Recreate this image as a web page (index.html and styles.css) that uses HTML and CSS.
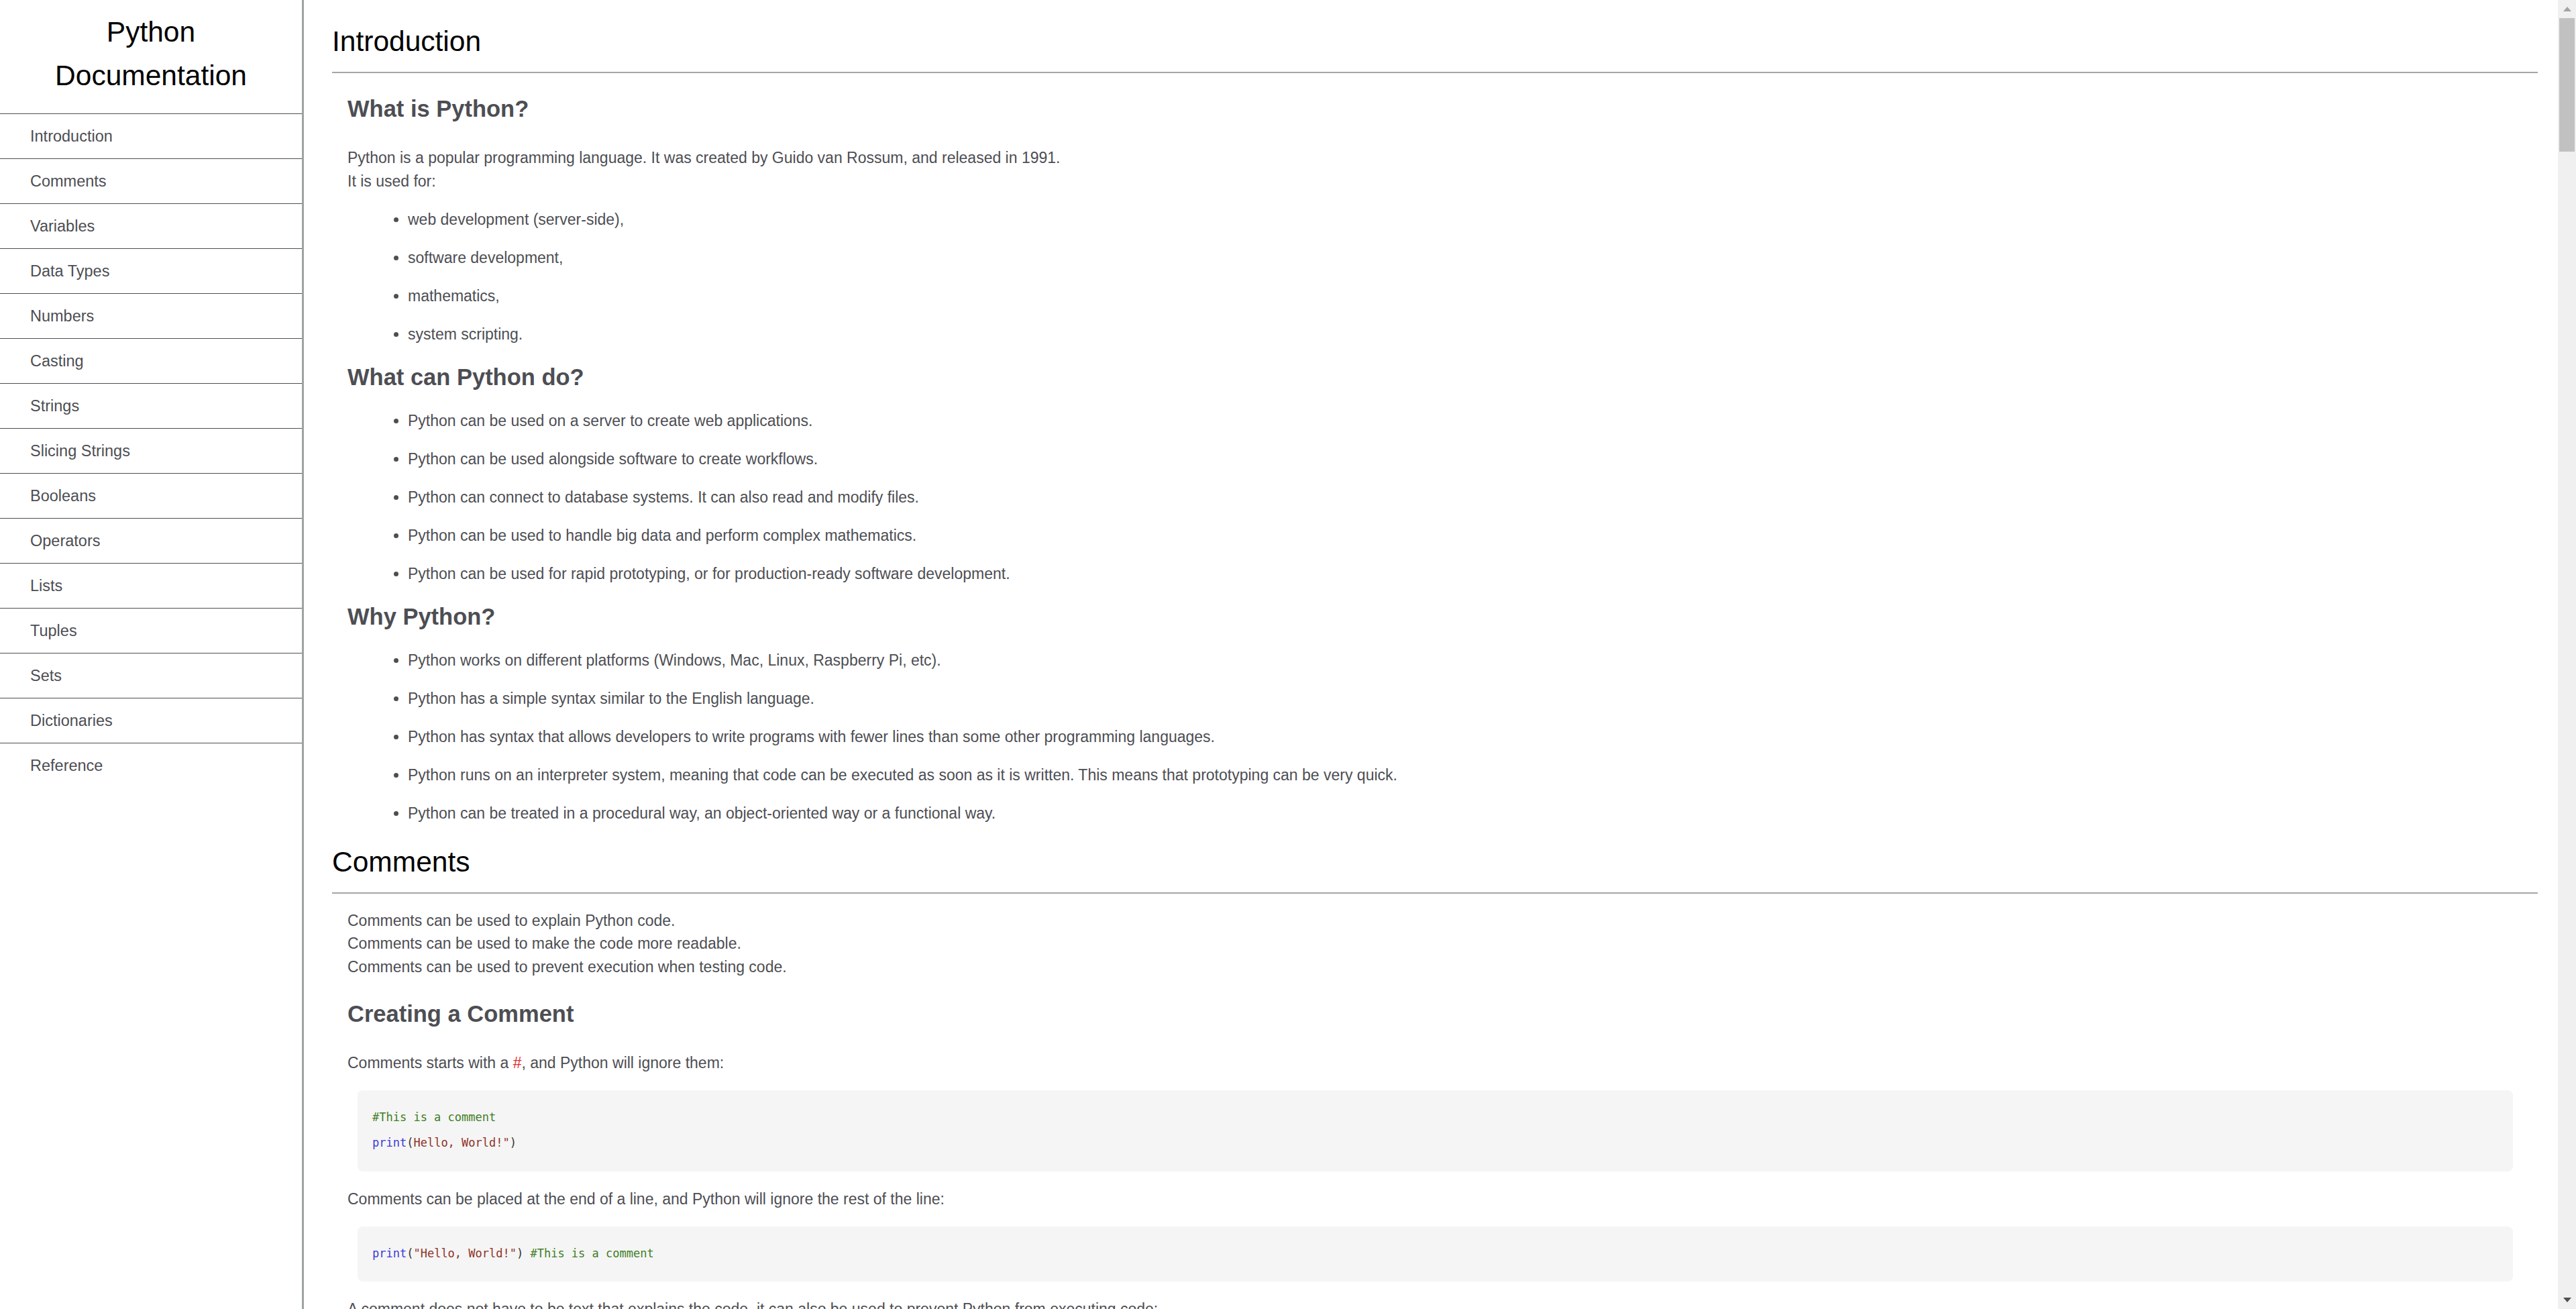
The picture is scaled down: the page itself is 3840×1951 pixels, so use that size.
FILE: index.html
```html
<!DOCTYPE html>
<html lang="en">
<head>
  <meta charset="UTF-8">
  <title>Python Documentation</title>
  <link rel="stylesheet" href="styles.css">
</head>
<body>
  <nav id="navbar" class="sidebar">
    <header class="nav-title">Python Documentation</header>
    <a class="nav-link" href="#Introduction">Introduction</a>
    <a class="nav-link" href="#Comments">Comments</a>
    <a class="nav-link" href="#Variables">Variables</a>
    <a class="nav-link" href="#Data_Types">Data Types</a>
    <a class="nav-link" href="#Numbers">Numbers</a>
    <a class="nav-link" href="#Casting">Casting</a>
    <a class="nav-link" href="#Strings">Strings</a>
    <a class="nav-link" href="#Slicing_Strings">Slicing Strings</a>
    <a class="nav-link" href="#Booleans">Booleans</a>
    <a class="nav-link" href="#Operators">Operators</a>
    <a class="nav-link" href="#Lists">Lists</a>
    <a class="nav-link" href="#Tuples">Tuples</a>
    <a class="nav-link" href="#Sets">Sets</a>
    <a class="nav-link" href="#Dictionaries">Dictionaries</a>
    <a class="nav-link" href="#Reference">Reference</a>
  </nav>

  <main id="main-doc" class="main">
    <section class="main-section" id="Introduction">
      <header class="section-title">Introduction</header>
      <div class="section-body">
        <h3>What is Python?</h3>
        <p>Python is a popular programming language. It was created by Guido van Rossum, and released in 1991.<br>It is used for:</p>
        <ul>
          <li>web development (server-side),</li>
          <li>software development,</li>
          <li>mathematics,</li>
          <li>system scripting.</li>
        </ul>
        <h3>What can Python do?</h3>
        <ul>
          <li>Python can be used on a server to create web applications.</li>
          <li>Python can be used alongside software to create workflows.</li>
          <li>Python can connect to database systems. It can also read and modify files.</li>
          <li>Python can be used to handle big data and perform complex mathematics.</li>
          <li>Python can be used for rapid prototyping, or for production-ready software development.</li>
        </ul>
        <h3>Why Python?</h3>
        <ul>
          <li>Python works on different platforms (Windows, Mac, Linux, Raspberry Pi, etc).</li>
          <li>Python has a simple syntax similar to the English language.</li>
          <li>Python has syntax that allows developers to write programs with fewer lines than some other programming languages.</li>
          <li>Python runs on an interpreter system, meaning that code can be executed as soon as it is written. This means that prototyping can be very quick.</li>
          <li>Python can be treated in a procedural way, an object-oriented way or a functional way.</li>
        </ul>
      </div>
    </section>

    <section class="main-section" id="Comments">
      <header class="section-title">Comments</header>
      <div class="section-body">
        <p>Comments can be used to explain Python code.<br>Comments can be used to make the code more readable.<br>Comments can be used to prevent execution when testing code.</p>
        <h3>Creating a Comment</h3>
        <p>Comments starts with a <code class="hash">#</code>, and Python will ignore them:</p>
<pre><code><span class="c">#This is a comment</span>
<span class="k">print</span>(<span class="s">Hello, World!"</span>)</code></pre>
        <p>Comments can be placed at the end of a line, and Python will ignore the rest of the line:</p>
<pre><code><span class="k">print</span>(<span class="s">"Hello, World!"</span>) <span class="c">#This is a comment</span></code></pre>
        <p>A comment does not have to be text that explains the code, it can also be used to prevent Python from executing code:</p>
<pre><code><span class="c">#print("Hello, World!")</span>
<span class="k">print</span>(<span class="s">"Cheers, Mate!"</span>)</code></pre>
      </div>
    </section>

    <section class="main-section" id="Variables">
      <header class="section-title">Variables</header>
      <div class="section-body">
        <p>Variables are containers for storing data values.</p>
        <h3>Creating Variables</h3>
        <p>Python has no command for declaring a variable.<br>A variable is created the moment you first assign a value to it.</p>
<pre><code>x = <span class="n">5</span>
y = <span class="s">"John"</span>
<span class="k">print</span>(x)
<span class="k">print</span>(y)</code></pre>
      </div>
    </section>
  </main>

  <div class="scrollbar" aria-hidden="true">
    <div class="scroll-btn"><span class="arrow-up"></span></div>
    <div class="scroll-track">
      <div class="scroll-thumb"></div>
    </div>
    <div class="scroll-btn"><span class="arrow-down"></span></div>
  </div>
</body>
</html>
```

FILE: styles.css
```css
html, body {
  margin: 0;
  padding: 0;
  height: 100vh;
  overflow: hidden;
}
body {
  display: grid;
  grid-template-columns: 453px 1fr 27px;
  font-family: "Liberation Sans", Arial, sans-serif;
  font-size: 23px;
  line-height: 34.5px;
  color: #4d4e53;
  background: #fff;
}

/* sidebar */
.sidebar {
  height: 100vh;
  border-right: 3px solid #9ea3a3;
  display: flex;
  flex-direction: column;
  overflow: hidden;
}
.nav-title {
  padding: 15px 20px 24px;
  font-size: 42.5px;
  line-height: 65px;
  text-align: center;
  color: #000;
}
.nav-link {
  display: block;
  border-top: 1px solid #4d4e53;
  padding-left: 45px;
  font-size: 23.5px;
  line-height: 66px;
  color: #4d4e53;
  text-decoration: none;
}

/* main column */
.main {
  height: 100vh;
  overflow-y: auto;
  scrollbar-width: none;
  padding: 7px 30px 0 42px;
  box-sizing: border-box;
}

.main-section {
  padding-top: 30px;
}
.section-title {
  margin: 0;
  padding-bottom: 20px;
  border-bottom: 2px solid #a5a5a5;
  font-size: 42.5px;
  line-height: 50px;
  color: #000;
}
.section-body {
  padding: 0 23px;
}
.section-body > p:first-child {
  margin-top: 23px;
}

h3 {
  margin: 25.5px 0 27px;
  font-size: 34.5px;
  line-height: 42px;
  font-weight: bold;
  color: #4d4e53;
}
.section-body > h3:first-child,
p + h3 {
  margin-top: 32px;
}
p {
  margin: 0;
}
h3 + p {
  margin-top: 35px;
}
ul {
  margin: 23px 0 0;
  padding-left: 90px;
}
li {
  margin-bottom: 22.5px;
}
li:last-child {
  margin-bottom: 0;
}

code.hash {
  font-family: inherit;
  color: #dd2c2c;
}
pre {
  margin: 23.4px 14px 24px 15px;
  padding: 22px;
  background: #f5f5f5;
  border-radius: 8px;
  font-family: "Liberation Mono", "DejaVu Sans Mono", monospace;
  font-size: 17px;
  line-height: 37.5px;
  color: #333;
}
pre .c { color: #3f7f1f; }
pre .k { color: #3c3cdc; }
pre .s { color: #8f3326; }
pre .n { color: #1c7a6e; }

/* page scrollbar */
.scrollbar {
  height: 100vh;
  background: #f0f0f0;
  display: flex;
  flex-direction: column;
}
.scroll-btn {
  height: 27px;
  display: flex;
  align-items: center;
  justify-content: center;
}
.arrow-up {
  border-left: 6.5px solid transparent;
  border-right: 6.5px solid transparent;
  border-bottom: 7px solid #a3a3a3;
}
.arrow-down {
  border-left: 6.5px solid transparent;
  border-right: 6.5px solid transparent;
  border-top: 7px solid #505050;
}
.scroll-track {
  flex: 1;
  padding: 0 2px;
}
.scroll-thumb {
  height: 199px;
  background: #c1c1c1;
}
```
